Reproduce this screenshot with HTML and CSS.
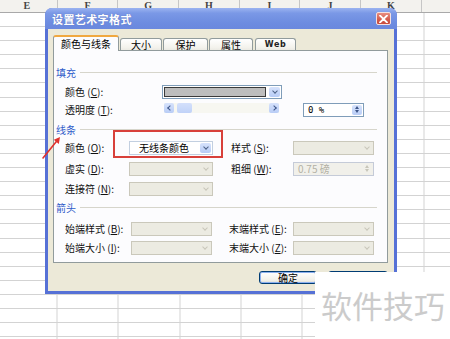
FILE: index.html
```html
<!DOCTYPE html>
<html lang="zh-CN">
<head>
<meta charset="utf-8">
<title>设置艺术字格式</title>
<link rel="stylesheet" href="styles.css">
</head>
<body>
<div class="sheet">
  <div class="col-head">
    <span>E</span><span>F</span><span>G</span><span>H</span><span>I</span><span>J</span><span>K</span><span></span>
  </div>
  <div class="grid"></div>
</div>

<div class="dialog">
  <div class="titlebar">
    <span class="title">设置艺术字格式</span>
    <span class="close">
      <svg width="9" height="8" viewBox="0 0 9 8"><path d="M1 0.5 L8 7.5 M8 0.5 L1 7.5" stroke="#fff" stroke-width="1.8" stroke-linecap="round"/></svg>
    </span>
  </div>
  <div class="client">
    <div class="tabs">
      <div class="tab active">颜色与线条</div>
      <div class="tab t2">大小</div>
      <div class="tab t3">保护</div>
      <div class="tab t4">属性</div>
      <div class="tab t5 web">Web</div>
    </div>
    <div class="panel">
      <div class="sec-head s1"><span>填充</span><i></i></div>
      <div class="row rc">
        <span class="lbl lw">颜色 (<u>C</u>):</span>
        <div class="combo fill-combo"><span class="swatch"></span><span class="btn"></span></div>
      </div>
      <div class="row rt">
        <span class="lbl lw">透明度 (<u>T</u>):</span>
        <div class="scroll"><span class="sbtn left"></span><span class="thumb"></span><span class="track"></span><span class="sbtn right"></span></div>
        <div class="spin"><span class="val">0 %</span><span class="sb"><i class="up"></i><i class="down"></i></span></div>
      </div>

      <div class="sec-head s2"><span>线条</span><i></i></div>
      <div class="row ro">
        <span class="lbl l1">颜色 (<u>O</u>):</span>
        <div class="combo c1 text-combo"><span class="txt">无线条颜色</span><span class="btn"></span></div>
        <span class="lbl l2">样式 (<u>S</u>):</span>
        <div class="combo c2 dis"><span class="txt"></span><span class="btn"></span></div>
      </div>
      <div class="row rd">
        <span class="lbl l1">虚实 (<u>D</u>):</span>
        <div class="combo c1 dis"><span class="txt"></span><span class="btn"></span></div>
        <span class="lbl l2">粗细 (<u>W</u>):</span>
        <div class="spin c2 dis"><span class="val">0.75 磅</span><span class="sb"><i class="up"></i><i class="down"></i></span></div>
      </div>
      <div class="row rn">
        <span class="lbl l1">连接符 (<u>N</u>):</span>
        <div class="combo c1 dis"><span class="txt"></span><span class="btn"></span></div>
      </div>

      <div class="sec-head s3"><span>箭头</span><i></i></div>
      <div class="row rb">
        <span class="lbl l1a">始端样式 (<u>B</u>):</span>
        <div class="combo c1a dis"><span class="txt"></span><span class="btn"></span></div>
        <span class="lbl l2a">末端样式 (<u>E</u>):</span>
        <div class="combo c2 dis"><span class="txt"></span><span class="btn"></span></div>
      </div>
      <div class="row ri">
        <span class="lbl l1a">始端大小 (<u>I</u>):</span>
        <div class="combo c1a dis"><span class="txt"></span><span class="btn"></span></div>
        <span class="lbl l2a">末端大小 (<u>Z</u>):</span>
        <div class="combo c2 dis"><span class="txt"></span><span class="btn"></span></div>
      </div>
    </div>
    <div class="buttons">
      <button class="xpbtn ok">确定</button>
      <button class="xpbtn cancel" aria-label="取消"></button>
    </div>
  </div>
</div>

<div class="callout"></div>
<svg class="arrow" width="26" height="28" viewBox="0 0 26 28">
  <path d="M5 24 L18.4 7.6" stroke="#e0322d" stroke-width="1.6" stroke-linecap="round"/>
  <path d="M22 3 L20.8 9.9 L15.8 5.8 Z" fill="#e0322d"/>
</svg>

<div class="watermark">软件技巧</div>
</body>
</html>
```

FILE: styles.css
```css
* { box-sizing: border-box; }

html, body {
  margin: 0;
  padding: 0;
}

body {
  width: 450px;
  height: 339px;
  overflow: hidden;
  position: relative;
  background: #fff;
  font-family: "Noto Sans CJK SC", "Liberation Sans", sans-serif;
  font-size: 10px;
  color: #000;
}

/* ---------- spreadsheet ---------- */
.sheet {
  width: 450px;
  height: 339px;
  display: flex;
  flex-direction: column;
  overflow: hidden;
}

.col-head {
  display: flex;
  height: 13px;
  margin-left: -3px;
  background: #f3f2ee;
  border-bottom: 1px solid #a9a9a9;
  flex: 0 0 auto;
}

.col-head span {
  flex: 0 0 60.67px;
  border-right: 1px solid #c6c6c6;
  text-align: center;
  font-family: "Liberation Serif", serif;
  font-size: 10px;
  font-weight: bold;
  line-height: 11px;
  color: #444;
}

.grid {
  flex: 1 1 auto;
  margin-left: -3px;
  background-image:
    repeating-linear-gradient(to right, transparent 0 60.17px, #d3d3d3 60.17px 61.17px),
    repeating-linear-gradient(to bottom, transparent 0 13.1px, #d3d3d3 13.1px 14.1px);
  background-position: -0.5px 0, 0 0;
}

/* ---------- dialog ---------- */
.dialog {
  position: absolute;
  z-index: 1;
  left: 45px;
  top: 8px;
  width: 352px;
  height: 286px;
  background: #5671d6;
  border-radius: 7px 7px 0 0;
  padding: 0 3px 3px 3px;
  display: flex;
  flex-direction: column;
}

.titlebar {
  height: 21px;
  margin: 0 -3px;
  padding: 0 6px 0 7px;
  border-radius: 7px 7px 0 0;
  background: linear-gradient(to bottom, #9bb3f0 0%, #7a98e6 25%, #6d8ce0 70%, #6a88de 100%);
  display: flex;
  align-items: center;
  justify-content: space-between;
  flex: 0 0 auto;
}

.title {
  color: #fff;
  font-weight: bold;
  font-size: 11px;
  letter-spacing: 0.4px;
  text-shadow: 0 0 1px #5a70b8;
}

.close {
  width: 15px;
  height: 13px;
  border: 1px solid #f4e0e0;
  border-radius: 2px;
  background: linear-gradient(to bottom, #e88d80, #d35a4b 60%, #c84c3e);
  display: flex;
  align-items: center;
  justify-content: center;
}

.client {
  flex: 1 1 auto;
  background: #ece9d8;
  padding: 6px 6px 0 5px;
  display: flex;
  flex-direction: column;
}

/* tabs */
.tabs {
  display: flex;
  align-items: flex-end;
  height: 16px;
  flex: 0 0 auto;
}

.tab {
  height: 13px;
  border: 1px solid #919b9c;
  border-bottom: none;
  border-radius: 3px 3px 0 0;
  background: linear-gradient(to bottom, #ffffff, #f3f2ec 70%, #e8e7e0);
  display: flex;
  align-items: center;
  justify-content: center;
  font-size: 10px;
  line-height: 1;
  margin-left: 1px;
}

.tab.active {
  position: relative;
  z-index: 2;
  height: 16px;
  width: 66px;
  margin-left: 0;
  background: #fcfcfe;
  border-top: 2px solid #f0a840;
  padding-bottom: 1px;
}

.t2 { width: 42px; }
.t3 { width: 45px; }
.t4 { width: 44px; }
.t5 { width: 41px; margin-left: 2px; }

.web {
  font-family: "DejaVu Sans", sans-serif;
  font-weight: bold;
  font-size: 8px;
  letter-spacing: 0.6px;
  color: #222;
}

/* panel */
.panel {
  position: relative;
  z-index: 1;
  margin-top: -1px;
  height: 213px;
  width: 335px;
  background: #fcfcfe;
  border: 1px solid #919b9c;
  padding: 0 10px 0 2px;
  display: flex;
  flex-direction: column;
  flex: 0 0 auto;
}

.sec-head {
  display: flex;
  align-items: center;
  height: 14px;
  color: #2f5bc9;
}

.sec-head span { padding-right: 4px; }

.sec-head i {
  flex: 1 1 auto;
  height: 1px;
  background: #d6d5cb;
}

.s1 { margin-top: 14px; }
.s2 { margin-top: 5px; }
.s3 { margin-top: 4px; }

.row {
  display: flex;
  align-items: center;
  height: 15px;
  padding-left: 9px;
}

.rc { margin-top: 5px; }
.rt { margin-top: 3px; }
.ro { margin-top: 4px; }
.rd { margin-top: 6px; }
.rn { margin-top: 5px; }
.rb { margin-top: 7px; }
.ri { margin-top: 4px; }

.lbl {
  white-space: nowrap;
  flex: 0 0 auto;
  font-size: 10px;
  color: #111;
}

.lw  { width: 97px; }
.l1  { width: 64px; }
.l2  { width: 62px; margin-left: 18px; }
.l1a { width: 66px; }
.l2a { width: 64px; margin-left: 17px; }

/* combo boxes */
.combo {
  display: flex;
  height: 14px;
  border: 1px solid #7f9db9;
  background: #fff;
  padding: 1px;
  flex: 0 0 auto;
}

.combo .txt {
  flex: 1 1 auto;
  line-height: 10px;
  padding-left: 8px;
  font-size: 10px;
}

.btn {
  width: 11px;
  flex: 0 0 auto;
  border-radius: 2px;
  background: linear-gradient(to bottom, #d6e2fb, #b7ccf6);
  display: flex;
  align-items: center;
  justify-content: center;
}

.btn::after {
  content: "";
  width: 3px;
  height: 3px;
  border-right: 1.5px solid #4d6185;
  border-bottom: 1.5px solid #4d6185;
  transform: rotate(45deg);
  margin-top: -2px;
}

.fill-combo { width: 120px; }

.fill-combo .swatch {
  flex: 1 1 auto;
  background: #bdbdbd;
  border: 1px solid #3a3a3a;
  margin-right: 3px;
}

.text-combo { border-color: #c2cfe0; }

.c1  { width: 84px; }
.c1a { width: 81px; }
.c2  { width: 81px; }

.dis {
  border-color: #cac8bb;
  background: #ecebe2;
}

.dis .btn {
  background: transparent;
}

.dis .btn::after {
  border-color: #c8c6ba;
}

/* scrollbar */
.scroll {
  align-self: flex-start;
  margin-top: 1px;
  margin-left: 2px;
  width: 115px;
  height: 10px;
  background: #f7f7f1;
  display: flex;
  flex: 0 0 auto;
}

.sbtn {
  width: 10px;
  border-radius: 2px;
  background: linear-gradient(to bottom, #d6e2fb, #b9cdf6);
  display: flex;
  align-items: center;
  justify-content: center;
}

.sbtn::after {
  content: "";
  width: 3px;
  height: 3px;
  border-right: 1.5px solid #3d5588;
  border-bottom: 1.5px solid #3d5588;
}

.sbtn.left::after  { transform: rotate(135deg); margin-left: 1px; }
.sbtn.right::after { transform: rotate(-45deg); margin-right: 1px; }

.thumb {
  width: 15px;
  margin-left: 3px;
  border-radius: 2px;
  background: linear-gradient(to bottom, #d4e0fb, #c0d2f8);
}

.track { flex: 1 1 auto; }

/* spin boxes */
.spin {
  width: 61px;
  height: 14px;
  margin-left: 24px;
  border: 1px solid #7f9db9;
  background: #fff;
  display: flex;
  padding: 1px;
  flex: 0 0 auto;
}

.spin .val {
  flex: 1 1 auto;
  padding-left: 3px;
  line-height: 10px;
  font-family: "DejaVu Sans Mono", monospace;
  font-size: 9px;
}

.spin .sb {
  width: 10px;
  border-radius: 2px;
  background: linear-gradient(to bottom, #d6e2fb, #b9cdf6);
  display: flex;
  flex-direction: column;
  align-items: center;
  justify-content: center;
  gap: 1px;
}

.spin .sb i {
  width: 0;
  height: 0;
  border-left: 2.5px solid transparent;
  border-right: 2.5px solid transparent;
}

.spin .sb .up   { border-bottom: 3px solid #3d5588; }
.spin .sb .down { border-top: 3px solid #3d5588; }

.spin.dis {
  margin-left: 0;
  width: 81px;
  border-color: #c5cbd8;
  background: #f1f0ea;
}

.spin.dis .val {
  color: #b3b1a5;
  font-family: "Noto Sans CJK SC", sans-serif;
  font-size: 10px;
}

.spin.dis .sb { background: transparent; }
.spin.dis .sb .up   { border-bottom-color: #c8c6ba; }
.spin.dis .sb .down { border-top-color: #c8c6ba; }

/* buttons */
.buttons {
  display: flex;
  justify-content: flex-end;
  gap: 11px;
  margin-top: 8px;
}

.xpbtn {
  height: 13px;
  padding: 0;
  border: 1px solid #003c74;
  border-radius: 3px;
  background: linear-gradient(to bottom, #ffffff, #f0efe8 80%, #d8d6cc);
  font-family: "Noto Sans CJK SC", sans-serif;
  font-size: 10px;
  line-height: 10px;
  color: #000;
}

.ok {
  width: 58px;
  box-shadow: inset 0 0 0 1px #8cb0ee;
}

.cancel { width: 60px; }

/* annotations */
.callout {
  position: absolute;
  z-index: 5;
  left: 113px;
  top: 130px;
  width: 110px;
  height: 28px;
  border: 2px solid #d8403a;
}

.arrow {
  position: absolute;
  z-index: 5;
  left: 38px;
  top: 134px;
}

.watermark {
  position: absolute;
  z-index: 6;
  left: 315px;
  top: 272px;
  right: 0;
  bottom: 0;
  background: #fff;
  color: #cbcbcb;
  font-size: 31px;
  line-height: 1;
  padding: 17px 0 0 6px;
  white-space: nowrap;
  letter-spacing: 0;
}
```
